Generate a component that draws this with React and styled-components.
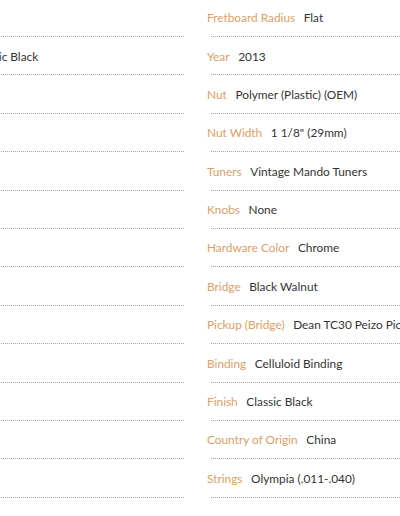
import React from 'react';
import styled, { createGlobalStyle } from 'styled-components';

const GlobalStyle = createGlobalStyle`
  html, body {
    margin: 0;
    padding: 0;
    background: #ffffff;
    overflow: hidden;
  }
  body {
    font-family: Lato, "Open Sans", sans-serif;
  }
`;

// two spec columns; the left one runs off the left edge of the frame
const SpecGrid = styled.div`
  display: grid;
  grid-template-columns: 249px 249px;
  column-gap: 23px;
  margin-left: -65px;
  margin-top: -1.4px;
`;

const SpecColumn = styled.div`
  display: flex;
  flex-direction: column;
`;

const SpecItem = styled.div`
  display: flex;
  flex-direction: column;
`;

const SpecLine = styled.div`
  display: flex;
  align-items: center;
  height: 20px;
  padding: 9px 0 8.4px;
  font-size: 11.85px;
  white-space: nowrap;
`;

const Label = styled.span`
  color: #dca066;
  margin-right: 8.6px;
`;

const Value = styled.span`
  color: #333333;
`;

const Rule = styled.div`
  margin-left: 4px;
  border-top: 1px dotted #a6a6a6;
`;

const leftSpecs = [
  ['Body', 'Ash'],
  ['Color', 'Classic Black'],
  ['Top', 'Fir'],
  ['Neck', 'Oak'],
  ['Frets', '20'],
  ['Scale', '14"'],
  ['Inlay', 'Dot'],
  ['Case', 'No'],
  ['Back', 'Ash'],
  ['Sides', 'Ash'],
  ['Joint', 'Set'],
  ['Trim', 'No'],
  ['Model', 'V'],
];

const rightSpecs = [
  ['Fretboard Radius', 'Flat'],
  ['Year', '2013'],
  ['Nut', 'Polymer (Plastic) (OEM)'],
  ['Nut Width', '1 1/8" (29mm)'],
  ['Tuners', 'Vintage Mando Tuners'],
  ['Knobs', 'None'],
  ['Hardware Color', 'Chrome'],
  ['Bridge', 'Black Walnut'],
  ['Pickup (Bridge)', 'Dean TC30 Peizo Pickup'],
  ['Binding', 'Celluloid Binding'],
  ['Finish', 'Classic Black'],
  ['Country of Origin', 'China'],
  ['Strings', 'Olympia (.011-.040)'],
];

const SpecList = ({ items }) => (
  <SpecColumn>
    {items.map(([label, value], i) => (
      <SpecItem key={i}>
        <SpecLine>
          <Label>{label}</Label>
          <Value>{value}</Value>
        </SpecLine>
        <Rule />
      </SpecItem>
    ))}
  </SpecColumn>
);

const App = () => (
  <>
    <GlobalStyle />
    <SpecGrid>
      <SpecList items={leftSpecs} />
      <SpecList items={rightSpecs} />
    </SpecGrid>
  </>
);

export default App;
